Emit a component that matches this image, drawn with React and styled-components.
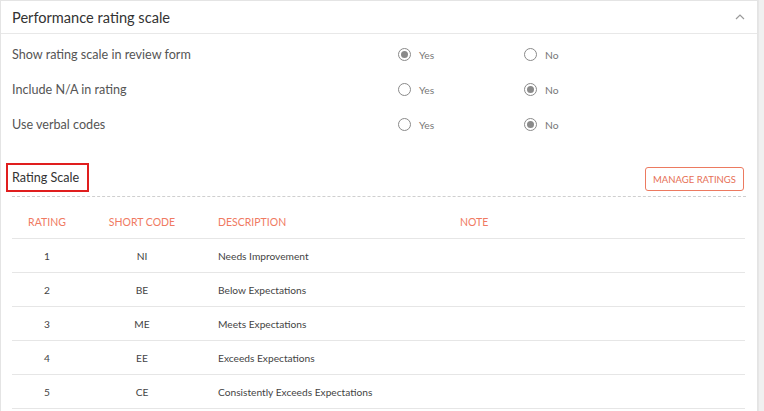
import styled, { createGlobalStyle } from "styled-components";

const GlobalStyle = createGlobalStyle`
  html, body {
    margin: 0;
    padding: 0;
    background: #f0f0f0;
    font-family: Lato, "Open Sans", sans-serif;
  }
`;

const Page = styled.div`
  display: flex;
  width: 764px;
  height: 411px;
  overflow: hidden;
`;

const Card = styled.div`
  width: 758px;
  background: #fff;
  border: 1px solid #e4e4e4;
  border-bottom: none;
  box-sizing: border-box;
`;

const Gutter = styled.div`
  flex: 1;
  background: #f0f0f0;
  border-left: 1px solid #e6e6e6;
`;

const Header = styled.div`
  height: 33px;
  display: flex;
  align-items: center;
  justify-content: space-between;
  padding: 0 12px 0 11px;
  border-bottom: 1px solid #e8e8e8;
  box-sizing: border-box;
`;

const Title = styled.div`
  font-size: 14.6px;
  color: #333;
`;

const Options = styled.div`
  padding-top: 3px;
`;

const OptionRow = styled.div`
  display: grid;
  grid-template-columns: 386px 126px 1fr;
  align-items: center;
  height: 35px;
  padding: 0 11px;
`;

const Label = styled.div`
  font-size: 12.6px;
  color: #555;
`;

const Choice = styled.label`
  display: flex;
  align-items: center;
  gap: 8px;
  font-size: 10.3px;
  color: #777;
`;

const Radio = styled.span`
  width: 13px;
  height: 13px;
  border: 1.5px solid #8a8a8a;
  border-radius: 50%;
  box-sizing: border-box;
  display: flex;
  align-items: center;
  justify-content: center;
  &::after {
    content: "";
    width: 7px;
    height: 7px;
    border-radius: 50%;
    background: ${(p) => (p.$checked ? "#8a8a8a" : "transparent")};
  }
`;

const Section = styled.div`
  padding: 20px 11px 0 11px;
`;

const SectionHead = styled.div`
  display: flex;
  align-items: flex-end;
  justify-content: space-between;
  height: 35px;
  border-bottom: 1px dashed #cfcfcf;
  box-sizing: border-box;
  padding-bottom: 4px;
`;

const SectionTitle = styled.div`
  font-size: 12.6px;
  line-height: 16px;
  color: #333;
  padding: 5px 8px 4px 4px;
  margin-left: -6px;
  border: 2px solid #e01e1e;
`;

const ManageButton = styled.button`
  height: 24px;
  width: 99px;
  padding: 0;
  margin: 0 2px 1px 0;
  background: #fff;
  border: 1px solid #ec7a60;
  border-radius: 3px;
  color: #e66f55;
  font-family: Lato, sans-serif;
  font-size: 9.5px;
  text-transform: uppercase;
`;

const TableRow = styled.div`
  display: grid;
  grid-template-columns: 70px 120px 242px 1fr;
  align-items: center;
  height: ${(p) => (p.$head ? "42px" : "34px")};
  padding-top: ${(p) => (p.$head ? "8px" : "0")};
  border-bottom: 1px solid #e6e6e6;
  box-sizing: border-box;
  margin-right: 1px;
`;

const Cell = styled.div`
  padding: 0 16px;
  text-align: ${(p) => (p.$center ? "center" : "left")};
  font-size: ${(p) => (p.$head ? "10.5px" : "10.2px")};
  color: ${(p) => (p.$head ? "#f07a62" : "#444")};
  text-transform: ${(p) => (p.$head ? "uppercase" : "none")};
  white-space: nowrap;
`;

const Chevron = () => (
  <svg width="10" height="6" viewBox="0 0 10 6">
    <polyline points="1,5 5,1 9,5" fill="none" stroke="#9a9a9a" strokeWidth="1.2" />
  </svg>
);

const options = [
  { label: "Show rating scale in review form", yes: true },
  { label: "Include N/A in rating", yes: false },
  { label: "Use verbal codes", yes: false },
];

const ratings = [
  [1, "NI", "Needs Improvement"],
  [2, "BE", "Below Expectations"],
  [3, "ME", "Meets Expectations"],
  [4, "EE", "Exceeds Expectations"],
  [5, "CE", "Consistently Exceeds Expectations"],
];

export default function App() {
  return (
    <Page>
      <GlobalStyle />
      <Card>
        <Header>
          <Title>Performance rating scale</Title>
          <Chevron />
        </Header>
        <Options>
          {options.map((o) => (
            <OptionRow key={o.label}>
              <Label>{o.label}</Label>
              <Choice>
                <Radio $checked={o.yes} />
                Yes
              </Choice>
              <Choice>
                <Radio $checked={!o.yes} />
                No
              </Choice>
            </OptionRow>
          ))}
        </Options>
        <Section>
          <SectionHead>
            <SectionTitle>Rating Scale</SectionTitle>
            <ManageButton>Manage Ratings</ManageButton>
          </SectionHead>
          <TableRow $head>
            <Cell $head $center>Rating</Cell>
            <Cell $head $center>Short Code</Cell>
            <Cell $head>Description</Cell>
            <Cell $head>Note</Cell>
          </TableRow>
          {ratings.map(([n, code, desc]) => (
            <TableRow key={n}>
              <Cell $center>{n}</Cell>
              <Cell $center>{code}</Cell>
              <Cell>{desc}</Cell>
              <Cell />
            </TableRow>
          ))}
        </Section>
      </Card>
      <Gutter />
    </Page>
  );
}
